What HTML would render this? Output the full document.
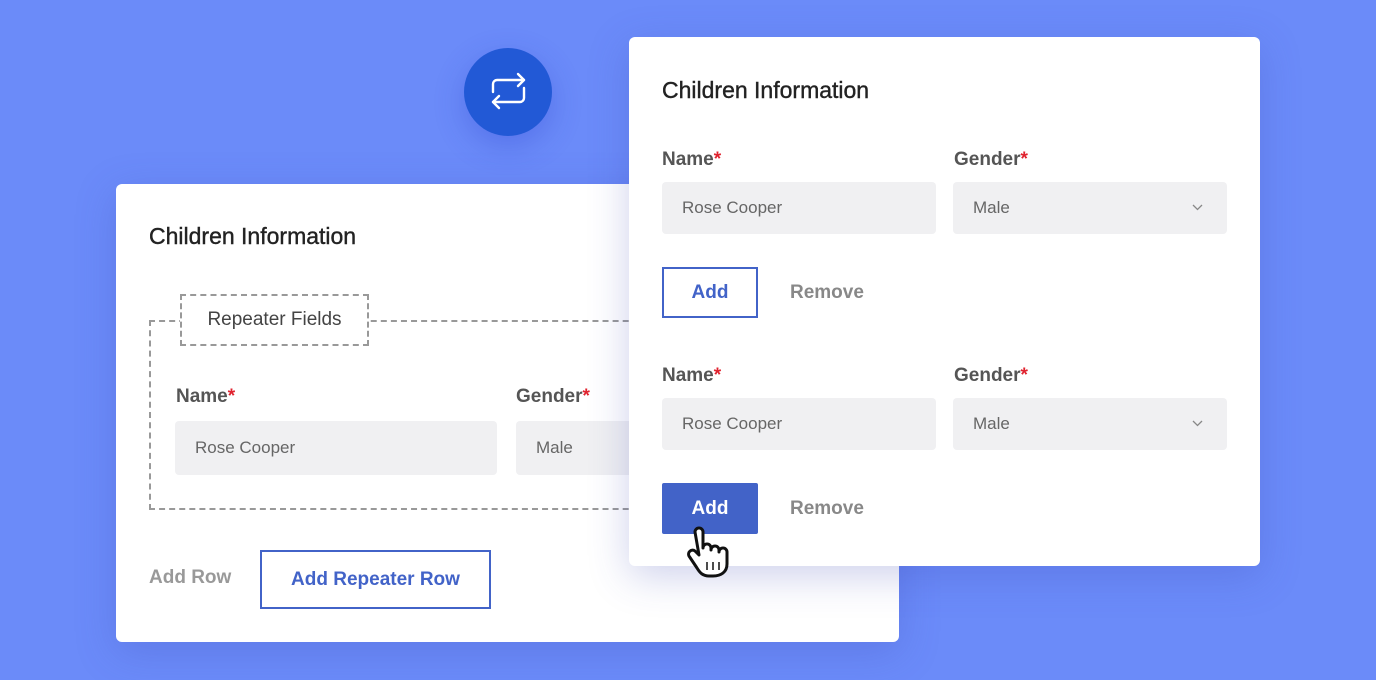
<!DOCTYPE html><html><head><style>
*{margin:0;padding:0;box-sizing:border-box}
body{width:1376px;height:680px;overflow:hidden;background:#6b8bf9;font-family:"Liberation Sans",sans-serif;position:relative}
.a{position:absolute}
.card{background:#fff;border-radius:6px;box-shadow:0 10px 40px rgba(60,70,180,.25)}
.t{font-size:23px;color:#222;font-weight:500;-webkit-text-stroke:0.4px #222}
.l{font-size:19px;color:#555;font-weight:bold}
.l b{color:#e0232f}
.in{background:#f0f0f2;border-radius:4px;font-size:17px;color:#666;padding-left:20px;display:flex;align-items:center}
.btn{font-size:19px;font-weight:bold;display:flex;align-items:center;justify-content:center}
.chev{position:absolute;right:24px;top:22px}
</style></head><body>
<div class="card a" style="left:116px;top:184px;width:783px;height:458px">
<div class="a t" style="left:33px;top:39px">Children Information</div>
<div class="a" style="left:33px;top:136px;width:520px;height:190px;border:2px dashed #999;border-right:none"></div>
<div class="a" style="left:64px;top:110px;width:189px;height:52px;border:2px dashed #999;background:#fff;font-size:19px;color:#444;display:flex;align-items:center;justify-content:center">Repeater Fields</div>
<div class="a l" style="left:60px;top:202px">Name<b>*</b></div>
<div class="a l" style="left:400px;top:202px">Gender<b>*</b></div>
<div class="a in" style="left:59px;top:237px;width:322px;height:54px">Rose Cooper</div>
<div class="a in" style="left:400px;top:237px;width:140px;height:54px">Male</div>
<div class="a" style="left:33px;top:383px;font-size:19px;color:#999;font-weight:bold">Add Row</div>
<div class="a btn" style="left:144px;top:366px;width:231px;height:59px;border:2px solid #4263c8;color:#4263c8">Add Repeater Row</div>
</div>
<div class="a" style="left:464px;top:48px;width:88px;height:88px;border-radius:50%;background:#2259d6;box-shadow:0 10px 30px rgba(40,60,200,.3)">
<svg width="88" height="88" viewBox="0 0 88 88"><g fill="none" stroke="#fff" stroke-width="2.4" stroke-linecap="round" stroke-linejoin="round"><path d="M29 44v-8a4 4 0 0 1 4-4h27"/><path d="M54 26l6 6-6 6"/><path d="M60 40v10a4 4 0 0 1-4 4H29"/><path d="M35 48l-6 6 6 6"/></g></svg>
</div>
<div class="card a" style="left:629px;top:37px;width:631px;height:529px">
<div class="a t" style="left:33px;top:40px">Children Information</div>
<div class="a l" style="left:33px;top:112px">Name<b>*</b></div>
<div class="a l" style="left:325px;top:112px">Gender<b>*</b></div>
<div class="a in" style="left:33px;top:145px;width:274px;height:52px">Rose Cooper</div>
<div class="a in" style="left:324px;top:145px;width:274px;height:52px">Male<svg class="chev" width="11" height="7" viewBox="0 0 11 7"><path d="M1 1l4.5 4.5L10 1" fill="none" stroke="#888" stroke-width="1.3"/></svg></div>
<div class="a btn" style="left:33px;top:230px;width:96px;height:51px;border:2px solid #4263c8;color:#4263c8">Add</div>
<div class="a btn" style="left:161px;top:230px;height:51px;color:#888">Remove</div>
<div class="a l" style="left:33px;top:328px">Name<b>*</b></div>
<div class="a l" style="left:325px;top:328px">Gender<b>*</b></div>
<div class="a in" style="left:33px;top:361px;width:274px;height:52px">Rose Cooper</div>
<div class="a in" style="left:324px;top:361px;width:274px;height:52px">Male<svg class="chev" width="11" height="7" viewBox="0 0 11 7"><path d="M1 1l4.5 4.5L10 1" fill="none" stroke="#888" stroke-width="1.3"/></svg></div>
<div class="a btn" style="left:33px;top:446px;width:96px;height:51px;background:#4263c8;color:#fff;border-radius:2px">Add</div>
<div class="a btn" style="left:161px;top:446px;height:51px;color:#888">Remove</div>
<svg class="a" style="left:56px;top:487px" width="52" height="56" viewBox="0 0 52 56"><path d="M10 8a4 4 0 0 1 8 0v16a4 4 0 0 1 8 0v2a4 4 0 0 1 8 0v2a4 4 0 0 1 8 0v12c0 8-6 12-14 12h-4c-6 0-9-3-12-8l-8-12a4 4 0 0 1 6-5l4 4z" fill="#fff" stroke="#111" stroke-width="3" stroke-linejoin="round"/><path d="M22 38v8M28 38v8M34 38v8" stroke="#111" stroke-width="1.5"/></svg>
</div>
</body></html>
